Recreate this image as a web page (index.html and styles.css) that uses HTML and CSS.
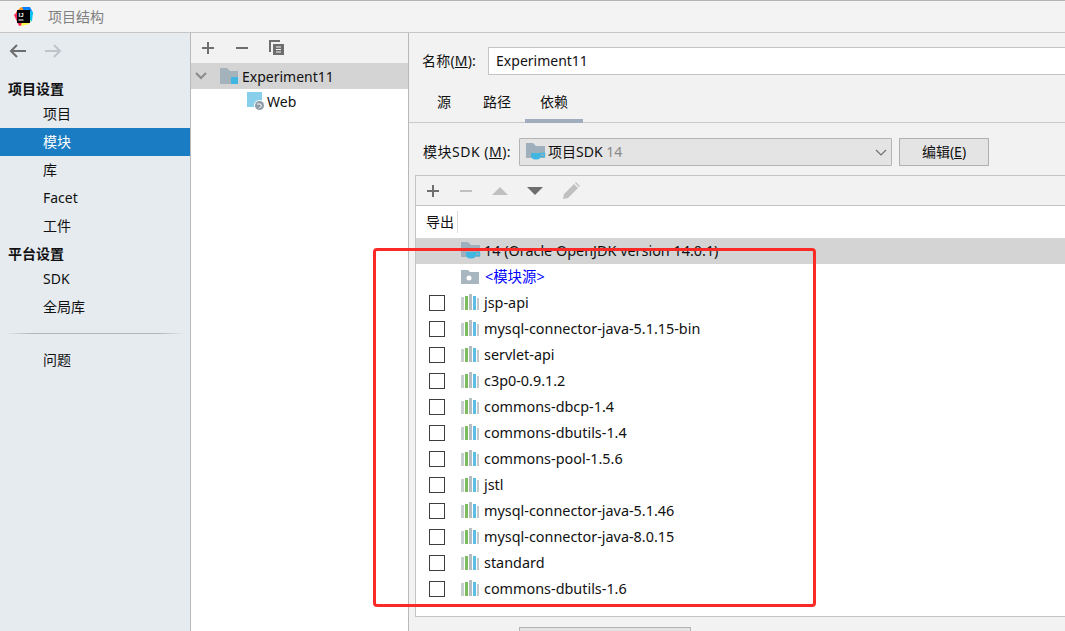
FILE: index.html
```html
<!DOCTYPE html>
<html lang="zh">
<head>
<meta charset="utf-8">
<title>项目结构</title>
<link rel="stylesheet" href="styles.css">
</head>
<body>
<svg class="defs" width="0" height="0">
  <symbol id="lib" viewBox="0 0 18 16">
    <rect x="0" y="3" width="3" height="13" fill="#c8cfd0"/>
    <rect x="4" y="2" width="3" height="14" fill="#7dbb5f"/>
    <rect x="8" y="0" width="3" height="16" fill="#b4bdbf"/>
    <rect x="12" y="2" width="3" height="14" fill="#5cbde6"/>
    <rect x="16" y="4" width="2" height="12" fill="#c3cacb"/>
  </symbol>
  <symbol id="jdk" viewBox="0 0 20 20">
    <path d="M0 1h7l3 3h9v12H0z" fill="#9fb0bc"/>
    <path d="M5 11h10v2.500c0 2.500-2 4-4 4H9c-2 0-4-1.500-4-4z" fill="#40b6e0"/>
    <path d="M15 11.500h3.500v3H15" fill="none" stroke="#40b6e0" stroke-width="1.400"/>
  </symbol>
</svg>
<header class="titlebar">
  <svg class="logo" width="21" height="21" viewBox="0 0 21 21">
    <path d="M3 6l5-5 5 3-8 8z" fill="#ff9419"/>
    <path d="M9 1h8l3 6-4 8z" fill="#087cfa"/>
    <path d="M13 3l7 3-1 9-5 2z" fill="#07c3f2"/>
    <path d="M1 9l5 11 8-2-10-12z" fill="#fe2857"/>
    <path d="M8 20l8-2 2-4-9 1z" fill="#fcf84a"/>
    <rect x="4" y="4" width="13" height="13" fill="#000"/>
    <text class="logo-text" x="5.500" y="10.500">IJ</text>
    <rect x="5.500" y="13.500" width="5" height="1" fill="#fff"/>
  </svg>
  <span class="title">项目结构</span>
</header>
<div class="main">
  <nav class="sidebar">
    <div class="history">
      <svg width="18" height="14" viewBox="0 0 18 14"><path d="M17 7H2M8 1L2 7l6 6" fill="none" stroke="#6e6e6e" stroke-width="2"/></svg>
      <svg width="18" height="14" viewBox="0 0 18 14"><path d="M1 7h15M10 1l6 6-6 6" fill="none" stroke="#c0c4c8" stroke-width="2"/></svg>
    </div>
    <div class="nav-head">项目设置</div>
    <div class="nav-item">项目</div>
    <div class="nav-item selected">模块</div>
    <div class="nav-item">库</div>
    <div class="nav-item">Facet</div>
    <div class="nav-item">工件</div>
    <div class="nav-head second">平台设置</div>
    <div class="nav-item">SDK</div>
    <div class="nav-item">全局库</div>
    <div class="nav-sep"></div>
    <div class="nav-item">问题</div>
  </nav>
  <section class="tree">
    <div class="tree-tools">
      <svg width="14" height="14" viewBox="0 0 14 14"><path d="M7 1v12M1 7h12" stroke="#6e6e6e" stroke-width="2"/></svg>
      <svg width="14" height="14" viewBox="0 0 14 14"><path d="M1 7h12" stroke="#6e6e6e" stroke-width="2"/></svg>
      <svg width="16" height="16" viewBox="0 0 16 16"><path d="M1 12V1h10" fill="none" stroke="#6e6e6e" stroke-width="2"/><path d="M4 4h11v11H4z" fill="#6e6e6e"/><path d="M7 7h5M7 9.500h5M7 12h5" stroke="#f2f2f2"/></svg>
    </div>
    <div class="tree-row active">
      <svg class="chev" width="12" height="8" viewBox="0 0 12 8"><path d="M1 1l5 5 5-5" fill="none" stroke="#8a8a8a" stroke-width="2"/></svg>
      <svg width="18" height="16" viewBox="0 0 18 16"><path d="M0 0h7l3 3h8v13H0z" fill="#a4b2bc"/><rect x="11" y="9" width="7" height="7" fill="#40b6e0"/></svg>
      <span>Experiment11</span>
    </div>
    <div class="tree-row child">
      <svg width="18" height="19" viewBox="0 0 18 19"><path d="M0 0h15v15H0z" fill="#87cfea"/><circle cx="12.500" cy="13.500" r="5.500" fill="#fff"/><circle cx="12.500" cy="13.500" r="4.500" fill="#8d9ba6"/><path d="M10 12h3.500l1 2-2.500 2.500" fill="none" stroke="#fff"/></svg>
      <span>Web</span>
    </div>
  </section>
  <section class="detail">
    <div class="name-row">
      <label>名称(<u>M</u>):</label>
      <div class="name-input">Experiment11</div>
    </div>
    <div class="tabs">
      <span class="tab">源</span>
      <span class="tab">路径</span>
      <span class="tab on">依赖</span>
    </div>
    <div class="sdk-row">
      <label>模块SDK (<u>M</u>):</label>
      <div class="combo">
        <svg class="ic" width="20" height="20"><use href="#jdk"/></svg>
        <span>项目SDK <em>14</em></span>
        <svg class="combo-arrow" width="12" height="7" viewBox="0 0 12 7"><path d="M1 1l5 5 5-5" fill="none" stroke="#707070" stroke-width="1.200"/></svg>
      </div>
      <button class="edit">编辑(<u>E</u>)</button>
    </div>
    <div class="panel">
      <div class="panel-tools">
        <svg width="14" height="14" viewBox="0 0 14 14"><path d="M7 1v12M1 7h12" stroke="#6e6e6e" stroke-width="2"/></svg>
        <svg width="14" height="14" viewBox="0 0 14 14"><path d="M1 7h12" stroke="#c0c0c0" stroke-width="2"/></svg>
        <svg width="16" height="8" viewBox="0 0 16 8"><path d="M0 8L8 0l8 8z" fill="#c0c0c0"/></svg>
        <svg width="16" height="8" viewBox="0 0 16 8"><path d="M0 0l8 8 8-8z" fill="#6e6e6e"/></svg>
        <svg width="18" height="18" viewBox="0 0 18 18"><path d="M1 17l1-5L12 2l4 4L6 16zM13 1l1-1 4 4-1 1z" fill="#c0c0c0"/></svg>
      </div>
      <div class="table-head"><span>导出</span></div>
      <div class="row sel"><svg class="ic" width="20" height="20"><use href="#jdk"/></svg><span>14 (Oracle OpenJDK version 14.0.1)</span></div>
      <div class="row src"><svg class="ic" width="18" height="16" viewBox="0 0 18 16"><path d="M0 1h7l2 2h9v12H0z" fill="#a8b6bf"/><circle cx="8" cy="9" r="2.500" fill="#fff"/></svg><span class="blue">&lt;模块源&gt;</span></div>
      <div class="row"><i class="check"></i><svg class="ic lib" width="18" height="16"><use href="#lib"/></svg><span>jsp-api</span></div>
      <div class="row"><i class="check"></i><svg class="ic lib" width="18" height="16"><use href="#lib"/></svg><span>mysql-connector-java-5.1.15-bin</span></div>
      <div class="row"><i class="check"></i><svg class="ic lib" width="18" height="16"><use href="#lib"/></svg><span>servlet-api</span></div>
      <div class="row"><i class="check"></i><svg class="ic lib" width="18" height="16"><use href="#lib"/></svg><span>c3p0-0.9.1.2</span></div>
      <div class="row"><i class="check"></i><svg class="ic lib" width="18" height="16"><use href="#lib"/></svg><span>commons-dbcp-1.4</span></div>
      <div class="row"><i class="check"></i><svg class="ic lib" width="18" height="16"><use href="#lib"/></svg><span>commons-dbutils-1.4</span></div>
      <div class="row"><i class="check"></i><svg class="ic lib" width="18" height="16"><use href="#lib"/></svg><span>commons-pool-1.5.6</span></div>
      <div class="row"><i class="check"></i><svg class="ic lib" width="18" height="16"><use href="#lib"/></svg><span>jstl</span></div>
      <div class="row"><i class="check"></i><svg class="ic lib" width="18" height="16"><use href="#lib"/></svg><span>mysql-connector-java-5.1.46</span></div>
      <div class="row"><i class="check"></i><svg class="ic lib" width="18" height="16"><use href="#lib"/></svg><span>mysql-connector-java-8.0.15</span></div>
      <div class="row"><i class="check"></i><svg class="ic lib" width="18" height="16"><use href="#lib"/></svg><span>standard</span></div>
      <div class="row"><i class="check"></i><svg class="ic lib" width="18" height="16"><use href="#lib"/></svg><span>commons-dbutils-1.6</span></div>
    </div>
    <div class="footer-btn"></div>
  </section>
</div>
<div class="annotation"></div>
</body>
</html>
```

FILE: styles.css
```css
* { box-sizing: border-box; }
html, body { margin: 0; height: 631px; overflow: hidden; }
body {
  width: 1065px;
  position: relative;
  background: #f2f2f2;
  color: #111;
  font: 14px/20px "Noto Sans", "Noto Sans CJK SC", sans-serif;
  display: flex;
  flex-direction: column;
}
.defs { position: absolute; }
.titlebar {
  height: 33px;
  flex: none;
  display: flex;
  align-items: center;
  padding-left: 13px;
  border-top: 1px solid #b4b4b4;
  border-bottom: 1px solid #c6c6c6;
  background: #f3f3f3;
}
.logo-text { font: bold 6px "Liberation Sans", sans-serif; fill: #fff; }
.title { margin-left: 14px; color: #808080; }
.main { flex: 1; display: flex; min-height: 0; }
.sidebar {
  width: 191px;
  flex: none;
  background: #e6ebf0;
  border-right: 1px solid #b9b9b9;
}
.history { height: 37px; display: flex; align-items: center; gap: 17px; padding: 0 0 1px 9px; }
.nav-head { height: 25px; padding-left: 8px; line-height: 27px; font-weight: 700; margin-top: 5px; }
.nav-head.second { margin-top: 0; }
.nav-item { height: 28px; padding-left: 43px; line-height: 27px; }
.nav-item.selected { background: #1a7dc4; color: #fff; }
.nav-sep {
  height: 1px;
  margin: 12px 5px 12px;
  background: linear-gradient(90deg, #e6ebf0, #b4b4b4 15%, #b4b4b4 85%, #e6ebf0);
}
.tree {
  width: 218px;
  flex: none;
  background: #fff;
  border-right: 1px solid #b9b9b9;
}
.tree-tools {
  height: 30px;
  display: flex;
  align-items: center;
  gap: 20px;
  padding-left: 10px;
  background: #f2f2f2;
}
.tree-row { height: 26px; display: flex; align-items: center; }
.tree-row.active { background: #d4d4d4; padding-left: 4px; }
.tree-row.active span { margin-left: 4px; padding-top: 2px; }
.chev { margin-right: 13px; }
.tree-row.child { padding-left: 56px; height: 25px; }
.tree-row.child span { margin-left: 2px; }
.detail { flex: 1; min-width: 0; position: relative; }
.name-row { display: flex; align-items: center; height: 55px; padding-left: 13px; }
.name-row label { letter-spacing: 0.200px; }
.name-input {
  margin-left: 12px;
  flex: 1;
  height: 28px;
  line-height: 25px;
  padding-left: 7px;
  background: #fff;
  border: 1px solid #c4c4c4;
  border-right: 0;
}
.tabs {
  height: 35px;
  display: flex;
  border-bottom: 1px solid #c9c9c9;
  padding-left: 16px;
}
.tab { padding: 2px 12px 0; line-height: 24px; }
.tab:first-child { margin-right: 8px; }
.tab:nth-child(2) { margin-right: 2px; }
.tab.on { border-bottom: 4px solid #a0adbd; height: 35px; padding: 2px 15px 0; }
.sdk-row { height: 52px; display: flex; align-items: center; padding-left: 14px; padding-top: 6px; }
.sdk-row label { width: 96px; flex: none; letter-spacing: 0.500px; }
.combo {
  width: 373px;
  height: 28px;
  display: flex;
  align-items: center;
  padding-left: 6px;
  background: #e4e4e4;
  border: 1px solid #b4b4b4;
  border-radius: 1px;
}
.combo .ic { margin-right: 2px; }
.combo em { font-style: normal; color: #8a8a8a; }
.combo-arrow { margin-left: auto; margin-right: 4px; }
.edit {
  margin-left: 7px;
  width: 90px;
  height: 28px;
  padding: 0;
  font: inherit;
  color: inherit;
  background: #e4e4e4;
  border: 1px solid #b0b0b0;
}
.panel {
  margin-left: 6px;
  height: 442px;
  background: #fff;
  border: 1px solid #c4c4c4;
  border-right: 0;
}
.panel-tools {
  height: 30px;
  display: flex;
  align-items: center;
  gap: 19px;
  padding-left: 10px;
  background: #f2f2f2;
  border-bottom: 1px solid #c4c4c4;
}
.table-head { height: 32px; display: flex; align-items: center; padding-left: 10px; padding-bottom: 1px; }
.table-head span { padding-right: 3px; border-right: 1px solid #dcdcdc; height: 22px; line-height: 22px; }
.row { height: 26px; display: flex; align-items: center; padding-left: 13px; font-size: 14.400px; }
.row.sel { background: #d4d4d4; padding-left: 45px; }
.row.src { padding-left: 45px; }
.check {
  width: 16px;
  height: 16px;
  flex: none;
  background: #fff;
  border: 1px solid #3e3e3e;
  margin-right: 16px;
}
.row .ic { margin-right: 5px; flex: none; }
.row .lib { margin-bottom: 2px; }
.row.sel .ic { margin-right: 3px; }
.blue { color: #0000ff; margin-left: 1px; }
.footer-btn {
  position: absolute;
  top: 594px;
  left: 110px;
  width: 172px;
  height: 30px;
  background: #e4e4e4;
  border: 1px solid #b4b4b4;
}
.annotation {
  position: absolute;
  left: 373px;
  top: 248px;
  width: 443px;
  height: 359px;
  border: 3px solid #fb2a26;
  border-radius: 4px;
}
```
